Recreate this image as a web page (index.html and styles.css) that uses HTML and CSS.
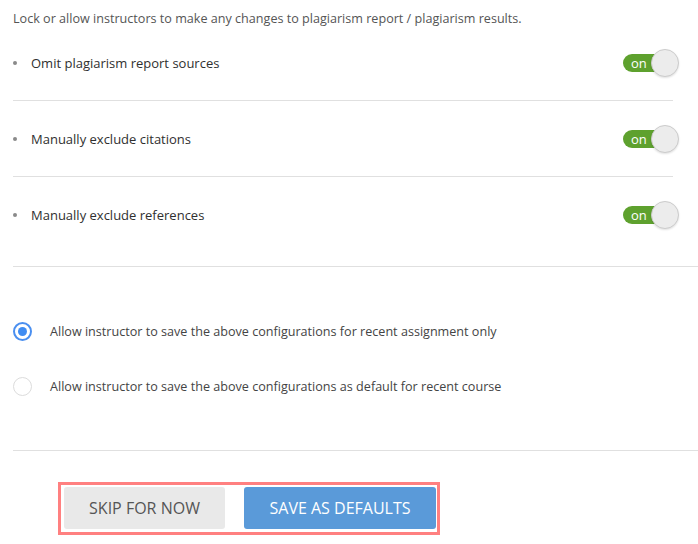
FILE: index.html
```html
<!DOCTYPE html>
<html lang="en">
<head>
<meta charset="utf-8">
<title>Plagiarism settings</title>
<link rel="stylesheet" href="styles.css">
</head>
<body>
<div class="page">
  <p class="intro">Lock or allow instructors to make any changes to plagiarism report / plagiarism results.</p>
  <ul class="items">
    <li class="item">
      <span class="bullet"></span>
      <span class="label">Omit plagiarism report sources</span>
      <span class="toggle"><span class="track">on</span><span class="knob"></span></span>
    </li>
    <li class="item">
      <span class="bullet"></span>
      <span class="label">Manually exclude citations</span>
      <span class="toggle"><span class="track">on</span><span class="knob"></span></span>
    </li>
    <li class="item">
      <span class="bullet"></span>
      <span class="label">Manually exclude references</span>
      <span class="toggle"><span class="track">on</span><span class="knob"></span></span>
    </li>
  </ul>
  <div class="options">
    <label class="option">
      <span class="radio checked"></span>
      <span class="option-text">Allow instructor to save the above configurations for recent assignment only</span>
    </label>
    <label class="option">
      <span class="radio"></span>
      <span class="option-text">Allow instructor to save the above configurations as default for recent course</span>
    </label>
  </div>
  <div class="actions">
    <div class="action-box">
      <button class="btn btn-skip">SKIP FOR NOW</button>
      <button class="btn btn-save">SAVE AS DEFAULTS</button>
    </div>
  </div>
</div>
</body>
</html>
```
FILE: styles.css
```css
* { box-sizing: border-box; }
html, body { margin: 0; padding: 0; background: #fff; }
body {
  font-family: "Open Sans", "Noto Sans", sans-serif;
  font-size: 13px;
  color: #333;
}
.page {
  padding-left: 13px;
}
.intro {
  margin: 0;
  height: 25px;
  padding-top: 10px;
  line-height: 18px;
  font-size: 12.6px;
  color: #555;
}
.items {
  list-style: none;
  margin: 0 25px 0 0;
  padding: 0;
}
.item {
  display: flex;
  align-items: center;
  height: 76px;
  border-bottom: 1px solid #e0e0e0;
}
.item:last-child {
  border-bottom: none;
  height: 89px;
  padding-bottom: 13px;
}
.bullet {
  width: 4px;
  height: 4px;
  border-radius: 50%;
  background: #8a8a8a;
  margin: 0 14px 0 0;
  flex: none;
}
.label {
  flex: 1;
  color: #2f2f2f;
}
.toggle {
  position: relative;
  width: 56px;
  height: 28px;
  margin-right: -6px;
  flex: none;
}
.track {
  position: absolute;
  left: 0;
  top: 5px;
  width: 46px;
  height: 18px;
  border-radius: 9px;
  background: #5ea12e;
  color: #fff;
  font-size: 13px;
  line-height: 18px;
  padding-left: 8px;
}
.knob {
  position: absolute;
  right: 0;
  top: 0;
  width: 28px;
  height: 28px;
  border-radius: 50%;
  background: #ececec;
  border: 1px solid #cccccc;
  box-shadow: 0 1px 2px rgba(0,0,0,0.12);
}
.options {
  border-top: 1px solid #e0e0e0;
  padding: 37px 0 36px;
}
.option {
  display: flex;
  align-items: center;
  height: 55px;
  color: #444;
  font-size: 12.6px;
}
.radio {
  width: 19px;
  height: 19px;
  border-radius: 50%;
  border: 1px solid #dcdcdc;
  background: #fff;
  margin-right: 18px;
  flex: none;
  display: flex;
  align-items: center;
  justify-content: center;
}
.radio.checked {
  border: 2px solid #4a8ff0;
}
.radio.checked::after {
  content: "";
  width: 9px;
  height: 9px;
  border-radius: 50%;
  background: #3f8cf2;
}
.actions {
  border-top: 1px solid #e0e0e0;
  padding-top: 31px;
}
.action-box {
  display: inline-flex;
  gap: 19px;
  margin-left: 45px;
  border: 3px solid #ff8080;
  padding: 2px 1px 3px 3px;
}
.btn {
  height: 42px;
  border: none;
  border-radius: 3px;
  font-family: "Open Sans", "Noto Sans", sans-serif;
  font-size: 16px;
  padding: 0;
  cursor: pointer;
}
.btn-skip {
  width: 161px;
  background: #e9e9e9;
  color: #555;
}
.btn-save {
  width: 192px;
  background: #5a9ad9;
  color: #fff;
}
```
